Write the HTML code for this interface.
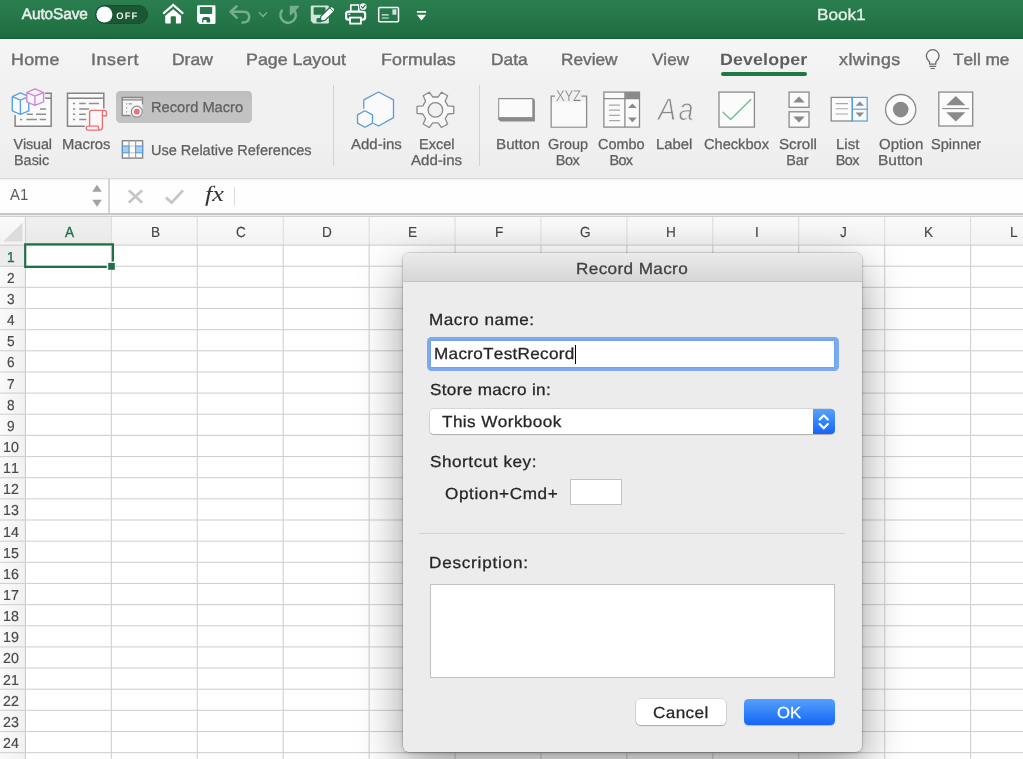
<!DOCTYPE html>
<html lang="en"><head><meta charset="utf-8"><title>Book1</title>
<style>
html,body{margin:0;padding:0}
body{width:1023px;height:759px;position:relative;overflow:hidden;background:#fff;font-family:"Liberation Sans",sans-serif}
#r{position:absolute;left:0;top:0;width:1023px;height:759px;will-change:transform}
.t{position:absolute;white-space:pre;line-height:1;font-kerning:none!important;text-rendering:geometricPrecision}
.b{position:absolute;box-sizing:border-box;display:block}
</style></head><body><div id="r">
<div class="b" style="left:0px;top:0px;width:1023px;height:39.2px;background:linear-gradient(#2b7e50 0%,#1f6e42 92%,#18603a 100%)"></div>
<span class="t" style="left:21.77px;top:6.86px;font:400 15.4px/1 'Liberation Sans',sans-serif;letter-spacing:-0.095px;color:#e4efe8;-webkit-text-stroke:0.55px #e4efe8;">AutoSave</span>
<span class="t" style="left:816.99px;top:7.96px;font:400 16px/1 'Liberation Sans',sans-serif;letter-spacing:0.000px;color:#e9f3ec;-webkit-text-stroke:0.3px #e9f3ec;transform:scaleX(1.072251308900523);transform-origin:0 0;">Book1</span>
<div class="b" style="left:0px;top:39px;width:1023px;height:41px;background:linear-gradient(#f6f6f6,#f1f1f1)"></div>
<span class="t" style="left:10.94px;top:51.63px;font:400 16.5px/1 'Liberation Sans',sans-serif;letter-spacing:0.268px;color:#6c6c6c;-webkit-text-stroke:0.4px #6c6c6c;transform:scaleX(1.08);transform-origin:0 0;">Home</span>
<span class="t" style="left:91.26px;top:51.63px;font:400 16.5px/1 'Liberation Sans',sans-serif;letter-spacing:0.529px;color:#6c6c6c;-webkit-text-stroke:0.4px #6c6c6c;transform:scaleX(1.08);transform-origin:0 0;">Insert</span>
<span class="t" style="left:171.97px;top:51.63px;font:400 16.5px/1 'Liberation Sans',sans-serif;letter-spacing:0.000px;color:#6c6c6c;-webkit-text-stroke:0.4px #6c6c6c;transform:scaleX(1.0594401554540205);transform-origin:0 0;">Draw</span>
<span class="t" style="left:246.19px;top:51.63px;font:400 16.5px/1 'Liberation Sans',sans-serif;letter-spacing:0.000px;color:#6c6c6c;-webkit-text-stroke:0.4px #6c6c6c;transform:scaleX(1.0791241626371508);transform-origin:0 0;">Page Layout</span>
<span class="t" style="left:381.19px;top:51.63px;font:400 16.5px/1 'Liberation Sans',sans-serif;letter-spacing:0.065px;color:#6c6c6c;-webkit-text-stroke:0.4px #6c6c6c;transform:scaleX(1.08);transform-origin:0 0;">Formulas</span>
<span class="t" style="left:490.73px;top:51.63px;font:400 16.5px/1 'Liberation Sans',sans-serif;letter-spacing:0.000px;color:#6c6c6c;-webkit-text-stroke:0.4px #6c6c6c;transform:scaleX(1.0492690250266001);transform-origin:0 0;">Data</span>
<span class="t" style="left:560.74px;top:51.63px;font:400 16.5px/1 'Liberation Sans',sans-serif;letter-spacing:0.000px;color:#6c6c6c;-webkit-text-stroke:0.4px #6c6c6c;transform:scaleX(1.0447626447626444);transform-origin:0 0;">Review</span>
<span class="t" style="left:651.58px;top:51.63px;font:400 16.5px/1 'Liberation Sans',sans-serif;letter-spacing:0.000px;color:#6c6c6c;-webkit-text-stroke:0.4px #6c6c6c;transform:scaleX(1.0327108742441318);transform-origin:0 0;">View</span>
<span class="t" style="left:719.81px;top:51.63px;font:700 16.5px/1 'Liberation Sans',sans-serif;letter-spacing:0.115px;color:#5e5e5e;transform:scaleX(1.08);transform-origin:0 0;">Developer</span>
<div class="b" style="left:720.5px;top:72px;width:86.5px;height:4.400000000000006px;background:#1e7a45;border-radius:2.2px"></div>
<span class="t" style="left:838.80px;top:51.63px;font:400 16.5px/1 'Liberation Sans',sans-serif;letter-spacing:0.435px;color:#6c6c6c;-webkit-text-stroke:0.4px #6c6c6c;transform:scaleX(1.08);transform-origin:0 0;">xlwings</span>
<span class="t" style="left:953.01px;top:51.63px;font:400 16.5px/1 'Liberation Sans',sans-serif;letter-spacing:0.000px;color:#6c6c6c;-webkit-text-stroke:0.4px #6c6c6c;transform:scaleX(1.041734971733452);transform-origin:0 0;">Tell me</span>
<div class="b" style="left:0px;top:80px;width:1023px;height:97.5px;background:linear-gradient(#f1f1f1 60%,#ececec)"></div>
<div class="b" style="left:116px;top:91px;width:135.6px;height:32px;background:linear-gradient(#bdbdbd,#c2c2c2 30%,#c2c2c2);border-radius:4.5px"></div>
<span class="t" style="left:13.54px;top:138.31px;font:400 14.4px/1 'Liberation Sans',sans-serif;letter-spacing:-0.139px;color:#5f5f5f;-webkit-text-stroke:0.28px #5f5f5f;">Visual</span>
<span class="t" style="left:14.02px;top:154.11px;font:400 14.4px/1 'Liberation Sans',sans-serif;letter-spacing:0.000px;color:#5f5f5f;-webkit-text-stroke:0.28px #5f5f5f;transform:scaleX(1.0014393833867297);transform-origin:0 0;">Basic</span>
<span class="t" style="left:62.19px;top:138.31px;font:400 14.4px/1 'Liberation Sans',sans-serif;letter-spacing:0.000px;color:#5f5f5f;-webkit-text-stroke:0.28px #5f5f5f;transform:scaleX(1.0262326603488534);transform-origin:0 0;">Macros</span>
<span class="t" style="left:150.50px;top:100.91px;font:400 14.4px/1 'Liberation Sans',sans-serif;letter-spacing:0.000px;color:#5f5f5f;-webkit-text-stroke:0.28px #5f5f5f;transform:scaleX(1.019821439588236);transform-origin:0 0;">Record Macro</span>
<span class="t" style="left:150.58px;top:143.61px;font:400 14.4px/1 'Liberation Sans',sans-serif;letter-spacing:0.000px;color:#5f5f5f;-webkit-text-stroke:0.28px #5f5f5f;transform:scaleX(1.0086232530478738);transform-origin:0 0;">Use Relative References</span>
<div class="b" style="left:333.2px;top:85.4px;width:1.0px;height:80.9px;background:#d2d2d2"></div>
<span class="t" style="left:351.37px;top:138.31px;font:400 14.4px/1 'Liberation Sans',sans-serif;letter-spacing:0.000px;color:#5f5f5f;-webkit-text-stroke:0.28px #5f5f5f;transform:scaleX(1.0419134543806834);transform-origin:0 0;">Add-ins</span>
<span class="t" style="left:418.61px;top:138.31px;font:400 14.4px/1 'Liberation Sans',sans-serif;letter-spacing:0.000px;color:#5f5f5f;-webkit-text-stroke:0.28px #5f5f5f;transform:scaleX(1.0100408722564784);transform-origin:0 0;">Excel</span>
<span class="t" style="left:411.47px;top:154.11px;font:400 14.4px/1 'Liberation Sans',sans-serif;letter-spacing:-0.000px;color:#5f5f5f;-webkit-text-stroke:0.28px #5f5f5f;transform:scaleX(1.0460562514159952);transform-origin:0 0;">Add-ins</span>
<div class="b" style="left:478.7px;top:85.4px;width:1.0px;height:80.9px;background:#d2d2d2"></div>
<span class="t" style="left:495.95px;top:138.31px;font:400 14.4px/1 'Liberation Sans',sans-serif;letter-spacing:0.000px;color:#5f5f5f;-webkit-text-stroke:0.28px #5f5f5f;transform:scaleX(1.055278766310793);transform-origin:0 0;">Button</span>
<span class="t" style="left:548.37px;top:138.31px;font:400 14.4px/1 'Liberation Sans',sans-serif;letter-spacing:0.000px;color:#5f5f5f;-webkit-text-stroke:0.28px #5f5f5f;transform:scaleX(1.0027661679487943);transform-origin:0 0;">Group</span>
<span class="t" style="left:555.82px;top:154.11px;font:400 14.4px/1 'Liberation Sans',sans-serif;letter-spacing:-0.439px;color:#5f5f5f;-webkit-text-stroke:0.28px #5f5f5f;">Box</span>
<span class="t" style="left:598.37px;top:138.31px;font:400 14.4px/1 'Liberation Sans',sans-serif;letter-spacing:0.000px;color:#5f5f5f;-webkit-text-stroke:0.28px #5f5f5f;transform:scaleX(1.0047826991058422);transform-origin:0 0;">Combo</span>
<span class="t" style="left:609.52px;top:154.11px;font:400 14.4px/1 'Liberation Sans',sans-serif;letter-spacing:-0.689px;color:#5f5f5f;-webkit-text-stroke:0.28px #5f5f5f;">Box</span>
<span class="t" style="left:656.38px;top:138.31px;font:400 14.4px/1 'Liberation Sans',sans-serif;letter-spacing:0.000px;color:#5f5f5f;-webkit-text-stroke:0.28px #5f5f5f;transform:scaleX(1.0305520139774254);transform-origin:0 0;">Label</span>
<span class="t" style="left:704.36px;top:138.31px;font:400 14.4px/1 'Liberation Sans',sans-serif;letter-spacing:0.000px;color:#5f5f5f;-webkit-text-stroke:0.28px #5f5f5f;transform:scaleX(1.0150812208489512);transform-origin:0 0;">Checkbox</span>
<span class="t" style="left:779.31px;top:138.31px;font:400 14.4px/1 'Liberation Sans',sans-serif;letter-spacing:0.000px;color:#5f5f5f;-webkit-text-stroke:0.28px #5f5f5f;transform:scaleX(1.0526363615711376);transform-origin:0 0;">Scroll</span>
<span class="t" style="left:786.22px;top:154.11px;font:400 14.4px/1 'Liberation Sans',sans-serif;letter-spacing:-0.094px;color:#5f5f5f;-webkit-text-stroke:0.28px #5f5f5f;">Bar</span>
<span class="t" style="left:835.67px;top:138.31px;font:400 14.4px/1 'Liberation Sans',sans-serif;letter-spacing:0.000px;color:#5f5f5f;-webkit-text-stroke:0.28px #5f5f5f;transform:scaleX(1.0415741973664743);transform-origin:0 0;">List</span>
<span class="t" style="left:835.72px;top:154.11px;font:400 14.4px/1 'Liberation Sans',sans-serif;letter-spacing:-0.489px;color:#5f5f5f;-webkit-text-stroke:0.28px #5f5f5f;">Box</span>
<span class="t" style="left:878.69px;top:138.31px;font:400 14.4px/1 'Liberation Sans',sans-serif;letter-spacing:0.000px;color:#5f5f5f;-webkit-text-stroke:0.28px #5f5f5f;transform:scaleX(1.0438777854353325);transform-origin:0 0;">Option</span>
<span class="t" style="left:878.13px;top:154.11px;font:400 14.4px/1 'Liberation Sans',sans-serif;letter-spacing:0.000px;color:#5f5f5f;-webkit-text-stroke:0.28px #5f5f5f;transform:scaleX(1.0780545670225392);transform-origin:0 0;">Button</span>
<span class="t" style="left:931.44px;top:138.31px;font:400 14.4px/1 'Liberation Sans',sans-serif;letter-spacing:0.000px;color:#5f5f5f;-webkit-text-stroke:0.28px #5f5f5f;transform:scaleX(1.0114765660062823);transform-origin:0 0;">Spinner</span>
<div class="b" style="left:0px;top:177.5px;width:1023px;height:35.5px;background:linear-gradient(#d2d2d2 0,#f4f4f4 1.6px,#fefefe 3.2px,#fefefe)"></div>
<div class="b" style="left:107.5px;top:178px;width:2.5px;height:34.5px;background:#d6d6d6"></div>
<span class="t" style="left:9.77px;top:188.26px;font:400 16px/1 'Liberation Sans',sans-serif;letter-spacing:0.000px;color:#5a5a5a;transform:scaleX(0.93);transform-origin:0 0;">A1</span>
<span class="t" style="left:204.61px;top:183.94px;font:italic 400 21.8px/1 'Liberation Serif',serif;letter-spacing:0.000px;color:#333;transform:scaleX(1.2);transform-origin:0 0;">fx</span>
<div class="b" style="left:233.7px;top:186.6px;width:1.0px;height:19.099999999999994px;background:#dcdcdc"></div>
<div class="b" style="left:0px;top:213px;width:1023px;height:1.5px;background:#c6c6c6"></div>
<div class="b" style="left:0px;top:214.5px;width:1023px;height:2.5px;background:#ececec"></div>
<div class="b" style="left:0px;top:215.7px;width:1023px;height:1.0px;background:#cfcfcf"></div>
<div class="b" style="left:0px;top:216.7px;width:1023px;height:27.80000000000001px;background:linear-gradient(#fafafa,#f3f3f3)"></div>
<div class="b" style="left:0px;top:244.5px;width:25.5px;height:514.5px;background:linear-gradient(90deg,#fafafa,#f1f1f1)"></div>
<div class="b" style="left:25.5px;top:216.7px;width:85.8px;height:27.80000000000001px;background:linear-gradient(#f0f0f0,#e9e9e9)"></div>
<div class="b" style="left:0px;top:245px;width:25.5px;height:21.5px;background:#ececec"></div>
<svg class="b" style="left:0px;top:0px" width="1023" height="759" viewBox="0 0 1023 759"><rect x="24.90" y="244.5" width="1.1" height="515" fill="#cbcbcb"/><rect x="24.90" y="217" width="1.1" height="27.5" fill="#d2d2d2"/><rect x="110.82" y="244.5" width="1.1" height="515" fill="#d1d1d1"/><rect x="110.82" y="217" width="1.1" height="27.5" fill="#dedede"/><rect x="196.74" y="244.5" width="1.1" height="515" fill="#d1d1d1"/><rect x="196.74" y="217" width="1.1" height="27.5" fill="#dedede"/><rect x="282.66" y="244.5" width="1.1" height="515" fill="#d1d1d1"/><rect x="282.66" y="217" width="1.1" height="27.5" fill="#dedede"/><rect x="368.58" y="244.5" width="1.1" height="515" fill="#d1d1d1"/><rect x="368.58" y="217" width="1.1" height="27.5" fill="#dedede"/><rect x="454.50" y="244.5" width="1.1" height="515" fill="#d1d1d1"/><rect x="454.50" y="217" width="1.1" height="27.5" fill="#dedede"/><rect x="540.42" y="244.5" width="1.1" height="515" fill="#d1d1d1"/><rect x="540.42" y="217" width="1.1" height="27.5" fill="#dedede"/><rect x="626.34" y="244.5" width="1.1" height="515" fill="#d1d1d1"/><rect x="626.34" y="217" width="1.1" height="27.5" fill="#dedede"/><rect x="712.26" y="244.5" width="1.1" height="515" fill="#d1d1d1"/><rect x="712.26" y="217" width="1.1" height="27.5" fill="#dedede"/><rect x="798.18" y="244.5" width="1.1" height="515" fill="#d1d1d1"/><rect x="798.18" y="217" width="1.1" height="27.5" fill="#dedede"/><rect x="884.10" y="244.5" width="1.1" height="515" fill="#d1d1d1"/><rect x="884.10" y="217" width="1.1" height="27.5" fill="#dedede"/><rect x="970.02" y="244.5" width="1.1" height="515" fill="#d1d1d1"/><rect x="970.02" y="217" width="1.1" height="27.5" fill="#dedede"/><rect x="1055.94" y="244.5" width="1.1" height="515" fill="#d1d1d1"/><rect x="1055.94" y="217" width="1.1" height="27.5" fill="#dedede"/><rect x="0" y="244.50" width="1023" height="1.1" fill="#c9c9c9"/><rect x="0" y="265.65" width="1023" height="1.1" fill="#d1d1d1"/><rect x="0" y="286.80" width="1023" height="1.1" fill="#d1d1d1"/><rect x="0" y="307.95" width="1023" height="1.1" fill="#d1d1d1"/><rect x="0" y="329.10" width="1023" height="1.1" fill="#d1d1d1"/><rect x="0" y="350.25" width="1023" height="1.1" fill="#d1d1d1"/><rect x="0" y="371.40" width="1023" height="1.1" fill="#d1d1d1"/><rect x="0" y="392.55" width="1023" height="1.1" fill="#d1d1d1"/><rect x="0" y="413.70" width="1023" height="1.1" fill="#d1d1d1"/><rect x="0" y="434.85" width="1023" height="1.1" fill="#d1d1d1"/><rect x="0" y="456.00" width="1023" height="1.1" fill="#d1d1d1"/><rect x="0" y="477.15" width="1023" height="1.1" fill="#d1d1d1"/><rect x="0" y="498.30" width="1023" height="1.1" fill="#d1d1d1"/><rect x="0" y="519.45" width="1023" height="1.1" fill="#d1d1d1"/><rect x="0" y="540.60" width="1023" height="1.1" fill="#d1d1d1"/><rect x="0" y="561.75" width="1023" height="1.1" fill="#d1d1d1"/><rect x="0" y="582.90" width="1023" height="1.1" fill="#d1d1d1"/><rect x="0" y="604.05" width="1023" height="1.1" fill="#d1d1d1"/><rect x="0" y="625.20" width="1023" height="1.1" fill="#d1d1d1"/><rect x="0" y="646.35" width="1023" height="1.1" fill="#d1d1d1"/><rect x="0" y="667.50" width="1023" height="1.1" fill="#d1d1d1"/><rect x="0" y="688.65" width="1023" height="1.1" fill="#d1d1d1"/><rect x="0" y="709.80" width="1023" height="1.1" fill="#d1d1d1"/><rect x="0" y="730.95" width="1023" height="1.1" fill="#d1d1d1"/><rect x="0" y="752.10" width="1023" height="1.1" fill="#d1d1d1"/><rect x="0" y="773.25" width="1023" height="1.1" fill="#d1d1d1"/></svg>
<span class="t" style="left:64.83px;top:225.94px;font:400 14.6px/1 'Liberation Sans',sans-serif;letter-spacing:0.000px;color:#1e7145;-webkit-text-stroke:0.35px #1e7145;transform:scaleX(0.93);transform-origin:0 0;">A</span>
<span class="t" style="left:150.55px;top:225.94px;font:400 14.6px/1 'Liberation Sans',sans-serif;letter-spacing:0.000px;color:#444;-webkit-text-stroke:0.15px #444;transform:scaleX(0.93);transform-origin:0 0;">B</span>
<span class="t" style="left:236.21px;top:225.94px;font:400 14.6px/1 'Liberation Sans',sans-serif;letter-spacing:0.000px;color:#444;-webkit-text-stroke:0.15px #444;transform:scaleX(0.93);transform-origin:0 0;">C</span>
<span class="t" style="left:321.99px;top:225.94px;font:400 14.6px/1 'Liberation Sans',sans-serif;letter-spacing:0.000px;color:#444;-webkit-text-stroke:0.15px #444;transform:scaleX(0.93);transform-origin:0 0;">D</span>
<span class="t" style="left:408.25px;top:225.94px;font:400 14.6px/1 'Liberation Sans',sans-serif;letter-spacing:0.000px;color:#444;-webkit-text-stroke:0.15px #444;transform:scaleX(0.93);transform-origin:0 0;">E</span>
<span class="t" style="left:494.53px;top:225.94px;font:400 14.6px/1 'Liberation Sans',sans-serif;letter-spacing:0.000px;color:#444;-webkit-text-stroke:0.15px #444;transform:scaleX(0.93);transform-origin:0 0;">F</span>
<span class="t" style="left:579.77px;top:225.94px;font:400 14.6px/1 'Liberation Sans',sans-serif;letter-spacing:0.000px;color:#444;-webkit-text-stroke:0.15px #444;transform:scaleX(0.93);transform-origin:0 0;">G</span>
<span class="t" style="left:665.89px;top:225.94px;font:400 14.6px/1 'Liberation Sans',sans-serif;letter-spacing:0.000px;color:#444;-webkit-text-stroke:0.15px #444;transform:scaleX(0.93);transform-origin:0 0;">H</span>
<span class="t" style="left:754.83px;top:225.94px;font:400 14.6px/1 'Liberation Sans',sans-serif;letter-spacing:0.000px;color:#444;-webkit-text-stroke:0.15px #444;transform:scaleX(0.93);transform-origin:0 0;">I</span>
<span class="t" style="left:839.64px;top:225.94px;font:400 14.6px/1 'Liberation Sans',sans-serif;letter-spacing:0.000px;color:#444;-webkit-text-stroke:0.15px #444;transform:scaleX(0.93);transform-origin:0 0;">J</span>
<span class="t" style="left:923.55px;top:225.94px;font:400 14.6px/1 'Liberation Sans',sans-serif;letter-spacing:0.000px;color:#444;-webkit-text-stroke:0.15px #444;transform:scaleX(0.93);transform-origin:0 0;">K</span>
<span class="t" style="left:1010.37px;top:225.94px;font:400 14.6px/1 'Liberation Sans',sans-serif;letter-spacing:0.000px;color:#444;-webkit-text-stroke:0.15px #444;transform:scaleX(0.93);transform-origin:0 0;">L</span>
<span class="t" style="left:7.26px;top:250.61px;font:400 14.4px/1 'Liberation Sans',sans-serif;letter-spacing:0.000px;color:#1e7145;-webkit-text-stroke:0.35px #1e7145;transform:scaleX(0.95);transform-origin:0 0;">1</span>
<span class="t" style="left:7.28px;top:271.76px;font:400 14.4px/1 'Liberation Sans',sans-serif;letter-spacing:0.000px;color:#484848;-webkit-text-stroke:0.18px #484848;transform:scaleX(0.95);transform-origin:0 0;">2</span>
<span class="t" style="left:7.19px;top:292.91px;font:400 14.4px/1 'Liberation Sans',sans-serif;letter-spacing:0.000px;color:#484848;-webkit-text-stroke:0.18px #484848;transform:scaleX(0.95);transform-origin:0 0;">3</span>
<span class="t" style="left:6.99px;top:314.06px;font:400 14.4px/1 'Liberation Sans',sans-serif;letter-spacing:0.000px;color:#484848;-webkit-text-stroke:0.18px #484848;transform:scaleX(0.95);transform-origin:0 0;">4</span>
<span class="t" style="left:7.17px;top:335.21px;font:400 14.4px/1 'Liberation Sans',sans-serif;letter-spacing:0.000px;color:#484848;-webkit-text-stroke:0.18px #484848;transform:scaleX(0.95);transform-origin:0 0;">5</span>
<span class="t" style="left:7.19px;top:356.36px;font:400 14.4px/1 'Liberation Sans',sans-serif;letter-spacing:0.000px;color:#484848;-webkit-text-stroke:0.18px #484848;transform:scaleX(0.95);transform-origin:0 0;">6</span>
<span class="t" style="left:7.28px;top:377.51px;font:400 14.4px/1 'Liberation Sans',sans-serif;letter-spacing:0.000px;color:#484848;-webkit-text-stroke:0.18px #484848;transform:scaleX(0.95);transform-origin:0 0;">7</span>
<span class="t" style="left:7.19px;top:398.66px;font:400 14.4px/1 'Liberation Sans',sans-serif;letter-spacing:0.000px;color:#484848;-webkit-text-stroke:0.18px #484848;transform:scaleX(0.95);transform-origin:0 0;">8</span>
<span class="t" style="left:7.24px;top:419.81px;font:400 14.4px/1 'Liberation Sans',sans-serif;letter-spacing:0.000px;color:#484848;-webkit-text-stroke:0.18px #484848;transform:scaleX(0.95);transform-origin:0 0;">9</span>
<span class="t" style="left:3.20px;top:440.96px;font:400 14.4px/1 'Liberation Sans',sans-serif;letter-spacing:0.000px;color:#484848;-webkit-text-stroke:0.18px #484848;transform:scaleX(0.99);transform-origin:0 0;">10</span>
<span class="t" style="left:3.34px;top:462.11px;font:400 14.4px/1 'Liberation Sans',sans-serif;letter-spacing:0.000px;color:#484848;-webkit-text-stroke:0.18px #484848;transform:scaleX(0.99);transform-origin:0 0;">11</span>
<span class="t" style="left:3.36px;top:483.26px;font:400 14.4px/1 'Liberation Sans',sans-serif;letter-spacing:0.000px;color:#484848;-webkit-text-stroke:0.18px #484848;transform:scaleX(0.99);transform-origin:0 0;">12</span>
<span class="t" style="left:3.27px;top:504.41px;font:400 14.4px/1 'Liberation Sans',sans-serif;letter-spacing:0.000px;color:#484848;-webkit-text-stroke:0.18px #484848;transform:scaleX(0.99);transform-origin:0 0;">13</span>
<span class="t" style="left:3.06px;top:525.56px;font:400 14.4px/1 'Liberation Sans',sans-serif;letter-spacing:0.000px;color:#484848;-webkit-text-stroke:0.18px #484848;transform:scaleX(0.99);transform-origin:0 0;">14</span>
<span class="t" style="left:3.24px;top:546.71px;font:400 14.4px/1 'Liberation Sans',sans-serif;letter-spacing:0.000px;color:#484848;-webkit-text-stroke:0.18px #484848;transform:scaleX(0.99);transform-origin:0 0;">15</span>
<span class="t" style="left:3.27px;top:567.86px;font:400 14.4px/1 'Liberation Sans',sans-serif;letter-spacing:0.000px;color:#484848;-webkit-text-stroke:0.18px #484848;transform:scaleX(0.99);transform-origin:0 0;">16</span>
<span class="t" style="left:3.36px;top:589.01px;font:400 14.4px/1 'Liberation Sans',sans-serif;letter-spacing:0.000px;color:#484848;-webkit-text-stroke:0.18px #484848;transform:scaleX(0.99);transform-origin:0 0;">17</span>
<span class="t" style="left:3.26px;top:610.16px;font:400 14.4px/1 'Liberation Sans',sans-serif;letter-spacing:0.000px;color:#484848;-webkit-text-stroke:0.18px #484848;transform:scaleX(0.99);transform-origin:0 0;">18</span>
<span class="t" style="left:3.32px;top:631.31px;font:400 14.4px/1 'Liberation Sans',sans-serif;letter-spacing:0.000px;color:#484848;-webkit-text-stroke:0.18px #484848;transform:scaleX(0.99);transform-origin:0 0;">19</span>
<span class="t" style="left:3.20px;top:652.46px;font:400 14.4px/1 'Liberation Sans',sans-serif;letter-spacing:0.000px;color:#484848;-webkit-text-stroke:0.18px #484848;transform:scaleX(0.99);transform-origin:0 0;">20</span>
<span class="t" style="left:3.34px;top:673.61px;font:400 14.4px/1 'Liberation Sans',sans-serif;letter-spacing:0.000px;color:#484848;-webkit-text-stroke:0.18px #484848;transform:scaleX(0.99);transform-origin:0 0;">21</span>
<span class="t" style="left:3.36px;top:694.76px;font:400 14.4px/1 'Liberation Sans',sans-serif;letter-spacing:0.000px;color:#484848;-webkit-text-stroke:0.18px #484848;transform:scaleX(0.99);transform-origin:0 0;">22</span>
<span class="t" style="left:3.27px;top:715.91px;font:400 14.4px/1 'Liberation Sans',sans-serif;letter-spacing:0.000px;color:#484848;-webkit-text-stroke:0.18px #484848;transform:scaleX(0.99);transform-origin:0 0;">23</span>
<span class="t" style="left:3.06px;top:737.06px;font:400 14.4px/1 'Liberation Sans',sans-serif;letter-spacing:0.000px;color:#484848;-webkit-text-stroke:0.18px #484848;transform:scaleX(0.99);transform-origin:0 0;">24</span>
<svg class="b" style="left:0px;top:217px" width="26" height="28" viewBox="0 0 26 28"><polygon points="3,24.6 22.6,24.6 22.6,5.6" fill="#dcdcdc"/></svg>
<svg class="b" style="left:0;top:0" width="130" height="280" viewBox="0 0 130 280"><path d="M106.8 266.9 H25.2 V244.4 H112.9 V261.6" fill="none" stroke="#1e7145" stroke-width="2.2"/><rect x="107.4" y="262.2" width="7.6" height="7.8" fill="#fff"/><rect x="108.2" y="262.9" width="6.6" height="6.9" fill="#1e7145"/></svg>
<div class="b" style="left:403px;top:252.5px;width:459px;height:499.5px;border-radius:6px;background:#ececec;box-shadow:0 0 0 0.5px rgba(0,0,0,.22),0 16px 46px rgba(0,0,0,.40),0 1px 4px rgba(0,0,0,.15)"></div>
<div class="b" style="left:403px;top:252.5px;width:459px;height:29px;border-radius:6px 6px 0 0;background:linear-gradient(#ebebeb,#d6d6d6);border-bottom:1px solid #c4c4c4"></div>
<span class="t" style="left:575.80px;top:261.66px;font:400 16px/1 'Liberation Sans',sans-serif;letter-spacing:0.358px;color:#404040;-webkit-text-stroke:0.28px currentColor;transform:scaleX(1.07);transform-origin:0 0;">Record Macro</span>
<span class="t" style="left:429.00px;top:313.16px;font:400 16px/1 'Liberation Sans',sans-serif;letter-spacing:0.483px;color:#262626;-webkit-text-stroke:0.28px currentColor;transform:scaleX(1.07);transform-origin:0 0;">Macro name:</span>
<div class="b" style="left:426.6px;top:336.5px;width:412.19999999999993px;height:34.69999999999999px;background:#7da9ee;border-radius:4.5px"></div>
<div class="b" style="left:430.6px;top:340.8px;width:403.79999999999995px;height:25.80000000000001px;background:#fff;box-shadow:0 0 0 0.6px #6c9de6"></div>
<span class="t" style="left:434.00px;top:347.16px;font:400 16px/1 'Liberation Sans',sans-serif;letter-spacing:0.284px;color:#262626;-webkit-text-stroke:0.28px currentColor;transform:scaleX(1.07);transform-origin:0 0;">MacroTestRecord</span>
<div class="b" style="left:574.5px;top:345px;width:1.0px;height:19px;background:#000"></div>
<span class="t" style="left:429.52px;top:382.96px;font:400 16px/1 'Liberation Sans',sans-serif;letter-spacing:0.305px;color:#262626;-webkit-text-stroke:0.28px currentColor;transform:scaleX(1.07);transform-origin:0 0;">Store macro in:</span>
<div class="b" style="left:430.3px;top:408.5px;width:404.2px;height:25.5px;border-radius:4px;background:#fff;box-shadow:0 0 0 0.5px rgba(0,0,0,.18),0 1px 1px rgba(0,0,0,.2)"></div>
<div class="b" style="left:813px;top:408.5px;width:21.5px;height:25.5px;border-radius:0 4px 4px 0;background:linear-gradient(#55a2fd,#1266f8)"></div>
<svg class="b" style="left:813px;top:408.5px" width="21.5" height="25.5" viewBox="0 0 21.5 25.5"><path d="M6.6 10.6 L10.75 6.3 L14.9 10.6 M6.6 15 L10.75 19.3 L14.9 15" fill="none" stroke="#fff" stroke-width="2.1" stroke-linecap="round" stroke-linejoin="round"/></svg>
<span class="t" style="left:442.22px;top:414.66px;font:400 16px/1 'Liberation Sans',sans-serif;letter-spacing:0.397px;color:#262626;-webkit-text-stroke:0.28px currentColor;transform:scaleX(1.07);transform-origin:0 0;">This Workbook</span>
<span class="t" style="left:429.52px;top:454.66px;font:400 16px/1 'Liberation Sans',sans-serif;letter-spacing:0.509px;color:#262626;-webkit-text-stroke:0.28px currentColor;transform:scaleX(1.07);transform-origin:0 0;">Shortcut key:</span>
<span class="t" style="left:445.39px;top:486.66px;font:400 16px/1 'Liberation Sans',sans-serif;letter-spacing:0.568px;color:#262626;-webkit-text-stroke:0.28px currentColor;transform:scaleX(1.07);transform-origin:0 0;">Option+Cmd+</span>
<div class="b" style="left:570px;top:478.5px;width:52px;height:26.5px;background:#fff;border:1px solid #c2c2c2"></div>
<div class="b" style="left:418.7px;top:533px;width:426.3px;height:1px;background:#d4d4d4"></div>
<span class="t" style="left:428.90px;top:555.96px;font:400 16px/1 'Liberation Sans',sans-serif;letter-spacing:0.729px;color:#262626;-webkit-text-stroke:0.28px currentColor;transform:scaleX(1.07);transform-origin:0 0;">Description:</span>
<div class="b" style="left:429.8px;top:583.5px;width:405.2px;height:94.5px;background:#fff;border:1px solid #c2c2c2"></div>
<div class="b" style="left:636px;top:699px;width:89.5px;height:26px;border-radius:4.5px;background:#fff;box-shadow:0 0 0 0.5px rgba(0,0,0,.18),0 1px 1px rgba(0,0,0,.22)"></div>
<span class="t" style="left:652.73px;top:705.76px;font:400 16px/1 'Liberation Sans',sans-serif;letter-spacing:0.378px;color:#262626;-webkit-text-stroke:0.28px currentColor;transform:scaleX(1.07);transform-origin:0 0;">Cancel</span>
<div class="b" style="left:744px;top:699px;width:90.5px;height:26px;border-radius:4.5px;background:linear-gradient(#55a0fb,#1466f5);box-shadow:0 1px 1px rgba(0,0,0,.22)"></div>
<span class="t" style="left:777.01px;top:705.76px;font:400 16px/1 'Liberation Sans',sans-serif;letter-spacing:0.000px;color:#fff;-webkit-text-stroke:0.28px currentColor;transform:scaleX(1.0414934836209944);transform-origin:0 0;">OK</span>
<svg class="b" style="left:0px;top:0px" width="1023" height="40" viewBox="0 0 1023 40"><rect x="95.2" y="5" width="52.8" height="19" rx="9.5" fill="#1b5735"/><rect x="95.7" y="5.5" width="51.8" height="18" rx="9" fill="none" stroke="#164a2c" stroke-width="1" opacity=".6"/><circle cx="104.4" cy="14.5" r="8" fill="#fdfdfd"/><path d="M163.8 13.1 L173.2 5.0 L182.6 13.1" fill="none" stroke="#ffffff" stroke-width="2.1" stroke-linecap="round" stroke-linejoin="miter"/><path d="M165.2 15.8 L173.2 9.3 L181.1 15.8 V22.6 Q181.1 23.5 180.2 23.5 H175.9 V17.2 Q175.9 16.3 175 16.3 H171.6 Q170.7 16.3 170.7 17.2 V23.5 H166.1 Q165.2 23.5 165.2 22.6 Z" fill="#ffffff"/><path d="M198.3 5.2 H214.2 Q215.5 5.2 215.5 6.5 V22.8 Q215.5 24.1 214.2 24.1 H199.6 L197.1 21.4 V6.4 Q197.1 5.2 198.3 5.2 Z M200.6 7 Q199.8 7 199.8 7.8 V13.3 Q199.8 14.1 200.6 14.1 H211.4 Q212.2 14.1 212.2 13.3 V7.8 Q212.2 7 211.4 7 Z M202.1 22.6 V19.4 Q202.1 16.9 204.6 16.9 H207.7 Q210.2 16.9 210.2 19.4 V22.6 H206.5 V20 H203.4 V22.6 Z" fill="#ffffff" fill-rule="evenodd"/><path d="M236.7 6.3 L230.6 11.8 L236.7 17.6 M231.2 11.8 H243.4 Q249.2 11.8 249.2 17 Q249.2 22.4 242.6 22.6" fill="none" stroke="#74ae8e" stroke-width="2.5" stroke-linecap="round" stroke-linejoin="round"/><path d="M259.4 12.7 L263 16.6 L266.6 12.7" fill="none" stroke="#74ae8e" stroke-width="1.5" stroke-linecap="round" stroke-linejoin="round"/><path d="M281.9 10.6 A7.7 7.7 0 1 0 291.2 8.1" fill="none" stroke="#74ae8e" stroke-width="2.6" stroke-linecap="round"/><path d="M290.6 14.4 V6.5 H298.3 Z" fill="#74ae8e" stroke="#74ae8e" stroke-width="1.6" stroke-linejoin="round"/><path d="M312 5.5 H327.7 Q328.9 5.5 328.9 6.7 V22.3 Q328.9 23.5 327.7 23.5 H313.2 L310.8 20.8 V6.7 Q310.8 5.5 312 5.5 Z" fill="#d3e5da"/><rect x="313.6" y="7.3" width="11.9" height="7.4" rx="0.8" fill="#26764a"/><path d="M316.5 22.2 V19.6 Q316.5 18.1 318 18.1 H321.1 V22.2 Z" fill="#26764a"/><path d="M319.6 21.6 L320.9 16.4 L329.9 7.2 Q331.5 5.8 333.1 7.3 L334.2 8.4 Q335.6 10 334.2 11.5 L325 20.4 Z" fill="#ffffff" stroke="#24734a" stroke-width="1.3" stroke-linejoin="round"/><path d="M319.6 21.6 L320.4 18.6 L322.6 20.8 Z" fill="#24734a"/><path d="M329.6 7.7 L333.7 11.8" stroke="#24734a" stroke-width="1.0"/><path d="M350.8 11 V5 H358.8 V11" fill="none" stroke="#ffffff" stroke-width="1.6"/><rect x="346.1" y="11.7" width="19" height="8" rx="2.4" fill="none" stroke="#ffffff" stroke-width="2.2"/><rect x="350.1" y="17.6" width="10.8" height="6" fill="#24744a" stroke="#ffffff" stroke-width="1.8"/><rect x="348.4" y="13.6" width="1.8" height="1.4" fill="#ffffff"/><circle cx="363.2" cy="6.6" r="4.2" fill="#24744a"/><circle cx="363.2" cy="6.6" r="3.4" fill="#f2f7f4"/><path d="M361.4 6.7 L362.8 8.1 L365.2 5.2" fill="none" stroke="#24744a" stroke-width="1.1" stroke-linecap="round" stroke-linejoin="round"/><rect x="378.7" y="7.6" width="19.8" height="14.2" rx="1" fill="none" stroke="#ffffff" stroke-width="1.5"/><rect x="392.4" y="9.3" width="4" height="5.4" fill="#cfe2d6"/><path d="M381.8 14.8 H388.7 M381.8 18 H388.7" stroke="#e4efe8" stroke-width="1.2"/><rect x="416.9" y="11" width="9.2" height="1.7" fill="#ffffff"/><path d="M416.9 14.8 H426.1 L421.5 20.4 Z" fill="#ffffff"/></svg>
<span class="t" style="left:116.21px;top:10.64px;font:700 9.4px/1 'Liberation Sans',sans-serif;letter-spacing:1.167px;color:#e6efe9;">OFF</span>
<svg class="b" style="left:0px;top:0px" width="1023" height="80" viewBox="0 0 1023 80"><path d="M929.6 64.2 V62.6 Q929.6 61.4 928.4 60.6 A6.3 6.3 0 1 1 937 60.6 Q935.8 61.4 935.8 62.6 V64.2 Z" fill="none" stroke="#6c6c6c" stroke-width="1.3" stroke-linejoin="round"/><path d="M929.8 66.4 H935.6 M931 68.5 H934.4" stroke="#6c6c6c" stroke-width="1.2" stroke-linecap="round"/></svg>
<svg class="b" style="left:0px;top:0px" width="1023" height="180" viewBox="0 0 1023 180"><rect x="15.1" y="98.2" width="36.1" height="28" fill="#fafafa"/><path d="M15.1 115 V126.2 H51.2 V93.2 H45.1" fill="none" stroke="#858585" stroke-width="1.5" /><path d="M45.1 98.2 H51.2" fill="none" stroke="#858585" stroke-width="1.5" /><path d="M40 108.9 H46.1 M26.8 114.3 H32.9 M36 114.3 H46.1 M20 119.6 H22.2 M26.3 119.6 H37 M39.7 119.6 H46.1" fill="none" stroke="#8f8f8f" stroke-width="1.5" /><path d="M12.3 96.7 L20.4 92.9 L28.8 96.7 L28.8 110.9 L20.4 114.3 L12.3 110.9 Z M12.3 96.7 L20.4 100.1 L28.8 96.7 M20.4 100.1 V114.3" fill="#f8fbfe" stroke="#5aa2e0" stroke-width="1.4" stroke-linejoin="round"/><path d="M26.8 92.6 L34.9 88.8 L43.6 92.6 L43.6 101.8 L34.9 105.3 L26.8 101.8 Z M26.8 92.6 L34.9 96.2 L43.6 92.6 M34.9 96.2 V105.3" fill="#fdf8fe" stroke="#c98bd9" stroke-width="1.4" stroke-linejoin="round"/><rect x="67.5" y="93.2" width="36.3" height="33" fill="#fafafa"/><path d="M84.8 126.2 H67.5 V93.2 H103.8 V108.4 M67.5 98.2 H103.8" fill="none" stroke="#858585" stroke-width="1.5" /><path d="M72.9 103.6 H75.1 M79.2 103.6 H85.8 M88.8 103.6 H99 M72.9 108.9 H75.1 M79.2 108.9 H89 M72.9 114.3 H75.1 M79.2 114.3 H85.8 M72.9 119.6 H75.1 M79.2 119.6 H86.4" fill="none" stroke="#8f8f8f" stroke-width="1.5" /><path d="M89.6 126 V112.4 Q89.6 110.4 91.6 110.4 H104.2 Q106.4 110.4 106.4 112.6 V115.8 H102.4 V127.2 Q102.4 130.1 99.4 130.1 H88.4 Q86.3 130.1 86.3 128 Q86.3 126.1 88.4 126.1 H98.2" fill="#fdf7f7" stroke="#ee6f73" stroke-width="1.4" stroke-linejoin="round"/><path d="M102.4 115.8 V112.4 Q102.4 110.6 104 110.4 M98.2 126.1 Q98.4 129.6 99.6 130" fill="none" stroke="#ee6f73" stroke-width="1.3" /><rect x="122.2" y="97.5" width="20.3" height="18" fill="#f6f6f6"/><path d="M130.5 115.5 H122.2 V97.5 H142.5 V104.5 M122.2 99.9 H142.5" fill="none" stroke="#858585" stroke-width="1.3" /><path d="M126 103.8 H127.2 M128.6 103.8 H132 M126 107.8 H127.2 M126 111.8 H127.2" fill="none" stroke="#9a9a9a" stroke-width="1.2" /><circle cx="136.8" cy="111.7" r="5.5" fill="#f7f7f7" stroke="#8a8a8a" stroke-width="1.2"/><circle cx="136.8" cy="111.7" r="2.85" fill="#f06d76"/><rect x="122.4" y="140.7" width="20.2" height="17.4" fill="#fcfcfc" stroke="#858585" stroke-width="1.4"/><path d="M129 140.7 V158.1 M135.6 140.7 V158.1" fill="none" stroke="#a0a0a0" stroke-width="1.2" /><path d="M129 146 H135.6 M129 152.8 H135.6" fill="none" stroke="#c4c4c4" stroke-width="1.0" /><rect x="122.4" y="146" width="6.6" height="6.8" fill="#a9cdf0" stroke="#5b9bd5" stroke-width="1.1"/><rect x="135.6" y="146" width="7" height="6.8" fill="#a9cdf0" stroke="#5b9bd5" stroke-width="1.1"/><path d="M363.8 108.8 V99.8 L378.6 92 L393.5 99.8 V117.6 L378.6 126 L373.4 123.2" fill="#fafafa" stroke="#5b9bd5" stroke-width="1.3" stroke-linejoin="round"/><path d="M364.9 110.8 L372.5 114.9 V123.1 L364.9 127.3 L357.5 123.1 V114.9 Z" fill="#fafafa" stroke="#5b9bd5" stroke-width="1.3" stroke-linejoin="round"/><path d="M447.95 105.82 L453.77 106.40 L453.77 113.40 L447.95 113.98 L445.21 118.73 L447.62 124.06 L441.55 127.56 L438.14 122.81 L432.66 122.81 L429.25 127.56 L423.18 124.06 L425.59 118.73 L422.85 113.98 L417.03 113.40 L417.03 106.40 L422.85 105.82 L425.59 101.07 L423.18 95.74 L429.25 92.24 L432.66 96.99 L438.14 96.99 L441.55 92.24 L447.62 95.74 L445.21 101.07 Z" fill="#f8f8f8" stroke="#8a8a8a" stroke-width="1.3" stroke-linejoin="round"/><circle cx="435.4" cy="109.9" r="7.3" fill="#f1f1f1" stroke="#8a8a8a" stroke-width="1.3"/><path d="M498.2 98 H533 L534.9 100 V121.6 H500.4 L498.2 119.2 Z" fill="#8a8a8a"/><rect x="499.2" y="99.2" width="33.1" height="17.9" fill="#fbfbfb"/><path d="M555 96.2 H551.2 V127.1 H586.6 V96.2 H581.4" fill="none" stroke="#8a8a8a" stroke-width="1.3" /><rect x="551.9" y="102.2" width="34" height="24.2" fill="#f9f9f9"/><rect x="603.9" y="92.1" width="35.6" height="35" fill="#fafafa" stroke="#8a8a8a" stroke-width="1.3"/><rect x="625.2" y="92.1" width="14.3" height="6.6" fill="#8a8a8a"/><path d="M603.9 98.7 H639.5 M624.9 92.1 V127.1" fill="none" stroke="#8a8a8a" stroke-width="1.3" /><path d="M609 105.2 H620 M609 110.2 H620 M609 115.4 H620 M609 120.6 H620" fill="none" stroke="#a8a8a8" stroke-width="1.2" /><path d="M628 108 L632.4 103.4 L636.8 108 Z M628 117.6 L632.4 122.2 L636.8 117.6 Z" fill="#8a8a8a"/><rect x="719" y="92.1" width="35.4" height="35" fill="#fbfbfb" stroke="#8a8a8a" stroke-width="1.3"/><path d="M723 112.2 L730.6 119.6 L750.8 99.6" fill="none" stroke="#6fbf8b" stroke-width="1.4" stroke-linecap="round" stroke-linejoin="round"/><rect x="789.1" y="92.1" width="19.9" height="15.2" fill="#fbfbfb" stroke="#8a8a8a" stroke-width="1.3"/><rect x="789.1" y="111.8" width="19.9" height="15.4" fill="#fbfbfb" stroke="#8a8a8a" stroke-width="1.3"/><path d="M793.2 102.6 L799 96.6 L804.8 102.6 Z M793.2 116.4 L799 122.4 L804.8 116.4 Z" fill="#8a8a8a"/><rect x="831.2" y="97.4" width="21" height="23.6" fill="#fbfbfb" stroke="#8a8a8a" stroke-width="1.3"/><path d="M835.6 103.6 H848 M835.6 108.8 H848 M835.6 114 H848" fill="none" stroke="#a8a8a8" stroke-width="1.1" /><rect x="852.4" y="97.4" width="14.8" height="23.6" fill="#f6fafe" stroke="#5b9bd5" stroke-width="1.2"/><path d="M852.4 109.2 H867.2" fill="none" stroke="#5b9bd5" stroke-width="1.1" /><path d="M855.6 105.8 L859.8 101.4 L864 105.8 Z M855.6 112.6 L859.8 117 L864 112.6 Z" fill="#8a8a8a"/><circle cx="900.7" cy="109.6" r="15.1" fill="#fbfbfb" stroke="#8a8a8a" stroke-width="1.3"/><circle cx="900.7" cy="109.6" r="7.8" fill="#8a8a8a"/><rect x="938.8" y="92.1" width="33.9" height="33.9" fill="#fbfbfb" stroke="#8a8a8a" stroke-width="1.3"/><path d="M942.4 108.6 H969" fill="none" stroke="#8a8a8a" stroke-width="1.1" /><path d="M946.2 105.2 L955.8 96 L965.4 105.2 Z M946.2 112.2 L955.8 121.6 L965.4 112.2 Z" fill="#8a8a8a"/></svg>
<span class="t" style="left:555.61px;top:88.69px;font:400 15.6px/1 'Liberation Sans',sans-serif;letter-spacing:-0.227px;color:#808080;-webkit-text-stroke:0.25px #f1f1f1;transform:scaleX(0.84);transform-origin:0 0;">XYZ</span>
<span class="t" style="left:658.23px;top:94.02px;font:italic 400 31.4px/1 'Liberation Sans',sans-serif;letter-spacing:2.978px;color:#888;-webkit-text-stroke:0.8px #f1f1f1;transform:scaleX(0.86);transform-origin:0 0;">Aa</span>
<svg class="b" style="left:0px;top:0px" width="1023" height="215" viewBox="0 0 1023 215"><path d="M92.2 191.8 L97 184.8 L101.8 191.8 Z M92.2 199.8 L97 206.8 L101.8 199.8 Z" fill="#a2a2a2"/><path d="M128.8 190.2 L142.2 202.8 M142.2 190.2 L128.8 202.8" stroke="#c6c6c6" stroke-width="2.7" fill="none"/><path d="M166 197.6 L171.6 202.6 L183 190.4" stroke="#c6c6c6" stroke-width="2.8" fill="none"/></svg>
</div></body></html>
